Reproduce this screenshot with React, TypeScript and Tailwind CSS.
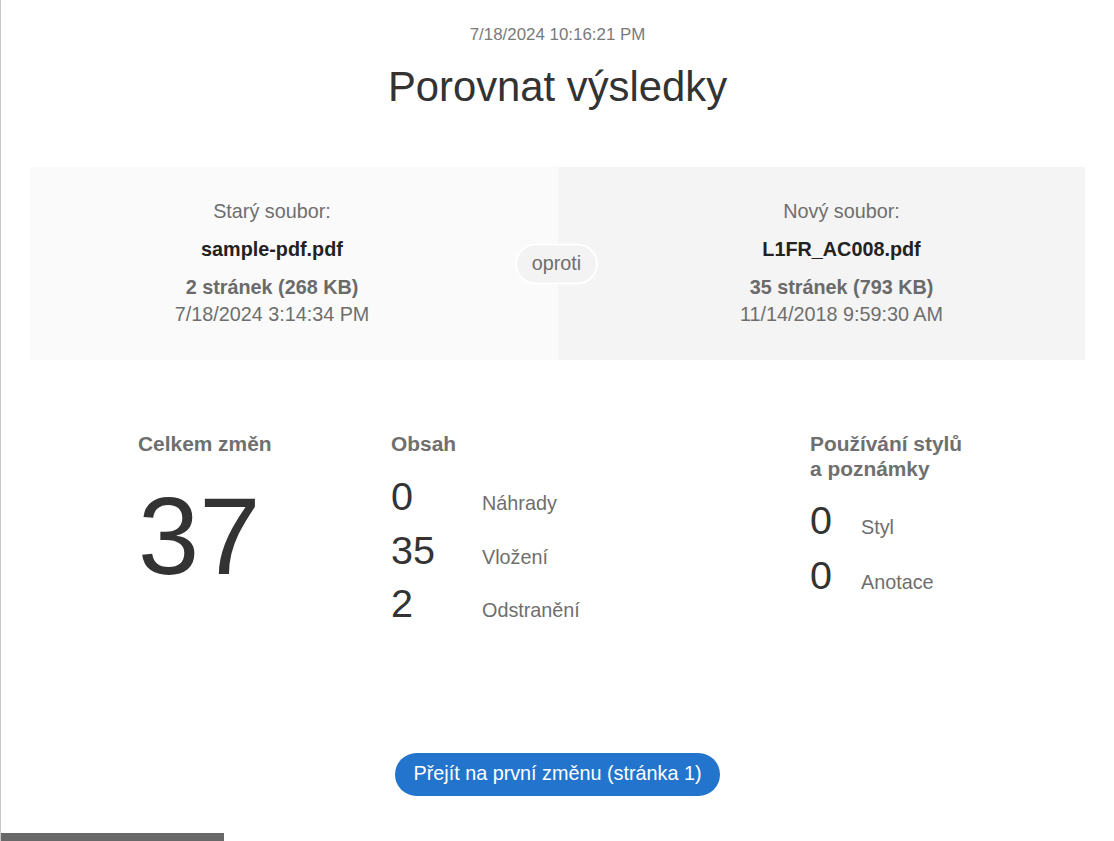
import React from "react";

const font = { fontFamily: '"Liberation Sans", Arial, sans-serif' };

function FileInfo({ label, name, pages, date, cls }: { label: string; name: string; pages: string; date: string; cls: string }) {
  return (
    <div className={`flex flex-col items-center pt-[32px] ${cls}`}>
      <div className="text-[19.8px] leading-[24px] text-[#6e6e6e]">{label}</div>
      <div className="mt-[14px] text-[19.8px] leading-[24px] font-bold text-[#222]">{name}</div>
      <div className="mt-[14px] text-[19.8px] leading-[24px] font-bold text-[#6a6a6a]">{pages}</div>
      <div className="mt-[3px] text-[19.8px] leading-[24px] text-[#6e6e6e]">{date}</div>
    </div>
  );
}

function Row({ value, label, numW, lh }: { value: number; label: string; numW: string; lh: string }) {
  return (
    <div className="flex items-baseline">
      <div className={`${numW} ${lh} text-[39.6px] text-[#333]`}>{value}</div>
      <div className="text-[19.8px] text-[#6e6e6e]">{label}</div>
    </div>
  );
}

export default function App() {
  return (
    <div style={font} className="relative h-[841px] w-full overflow-hidden bg-white border-l border-[#c8c8c8]">
      <div className="pt-[25px] text-center">
        <div className="text-[16.9px] leading-[20px] text-[#7a7a7a]">7/18/2024 10:16:21 PM</div>
        <h1 className="mt-[18px] text-[41.8px] leading-[48px] text-[#333]">Porovnat výsledky</h1>
      </div>

      <div className="relative mt-[56px] ml-[29px] mr-[29px] flex h-[193px]">
        <FileInfo
          cls="w-[528px] shrink-0 bg-[#fafafa] pr-[44px]"
          label="Starý soubor:"
          name="sample-pdf.pdf"
          pages="2 stránek (268 KB)"
          date="7/18/2024 3:14:34 PM"
        />
        <FileInfo
          cls="flex-1 bg-[#f4f4f4] pl-[40px]"
          label="Nový soubor:"
          name="L1FR_AC008.pdf"
          pages="35 stránek (793 KB)"
          date="11/14/2018 9:59:30 AM"
        />
        <div className="absolute left-[485px] top-1/2 -translate-y-1/2 flex h-[41px] w-[83px] items-center justify-center rounded-full border-2 border-white bg-[#f3f3f3] text-[19.8px] text-[#6e6e6e]">
          oproti
        </div>
      </div>

      <div className="mt-[71px] flex pl-[137px]">
        <div className="w-[253px]">
          <div className="text-[20.9px] leading-[25px] font-bold text-[#6f6f6f]">Celkem změn</div>
          <div className="mt-[25px] text-[110px] leading-[110px] text-[#333]">37</div>
        </div>
        <div className="w-[419px]">
          <div className="text-[20.9px] leading-[25px] font-bold text-[#6f6f6f]">Obsah</div>
          <div className="mt-[14px]">
            <Row value={0} label="Náhrady" numW="w-[91px]" lh="leading-[53.5px]" />
            <Row value={35} label="Vložení" numW="w-[91px]" lh="leading-[53.5px]" />
            <Row value={2} label="Odstranění" numW="w-[91px]" lh="leading-[53.5px]" />
          </div>
        </div>
        <div>
          <div className="text-[20.9px] leading-[25px] font-bold text-[#6f6f6f]">
            Používání stylů
            <br />a poznámky
          </div>
          <div className="mt-[12px]">
            <Row value={0} label="Styl" numW="w-[51px]" lh="leading-[55px]" />
            <Row value={0} label="Anotace" numW="w-[51px]" lh="leading-[55px]" />
          </div>
        </div>
      </div>

      <div className="mt-[122px] flex justify-center">
        <button className="h-[43px] w-[325px] rounded-full bg-[#2374cc] text-[19.8px] text-white">
          Přejít na první změnu (stránka 1)
        </button>
      </div>

      <div className="absolute bottom-0 left-0 h-[8px] w-[223px] bg-[#686868]" />
    </div>
  );
}
